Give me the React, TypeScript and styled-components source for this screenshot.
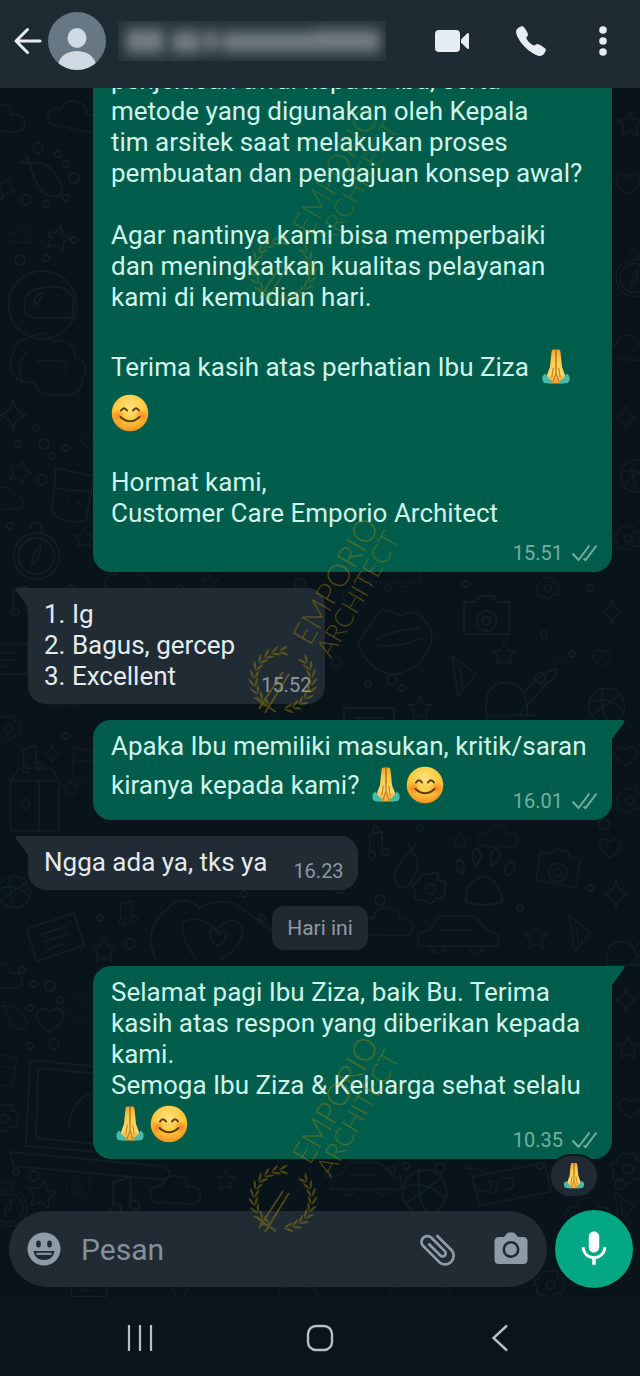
import React from "react";
import styled, { createGlobalStyle } from "styled-components";
import { MdAttachFile, MdMic } from "react-icons/md";
import { IoCall } from "react-icons/io5";

const GlobalStyle = createGlobalStyle`
  * { box-sizing: border-box; }
  body { margin: 0; background: #0b141a; font-family: Roboto, "Liberation Sans", sans-serif; }
`;

const Screen = styled.div`
  position: relative;
  display: flex;
  flex-direction: column;
  height: 100vh;
  overflow: hidden;
  background: #08131a;
`;

const Header = styled.header`
  display: flex;
  align-items: center;
  flex: none;
  height: 88px;
  padding: 0 26px 6px 10px;
  background: #1f2b33;
  z-index: 1;
`;

const IconButton = styled.button<{ $size?: number; $color?: string }>`
  display: flex;
  align-items: center;
  justify-content: center;
  flex: none;
  width: ${(p) => p.$size ?? 36}px;
  height: ${(p) => p.$size ?? 36}px;
  padding: 0;
  border: 0;
  background: none;
  color: ${(p) => p.$color ?? "#e6edf2"};
`;

const Avatar = styled.svg`
  flex: none;
  width: 58px;
  height: 58px;
  margin-left: 2px;
`;

const HiddenName = styled.svg`
  flex: none;
  width: 268px;
  height: 40px;
  margin-left: 12px;
`;

const HeaderActions = styled.div`
  display: flex;
  align-items: center;
  justify-content: space-between;
  width: 180px;
  margin-left: auto;
`;

const Chat = styled.main`
  position: relative;
  display: flex;
  flex-direction: column;
  flex: 1;
  min-height: 0;
  overflow: hidden;
`;

const Wallpaper = styled.svg`
  position: absolute;
  inset: 0;
  width: 100%;
  height: 100%;
`;

const Messages = styled.section`
  position: relative;
  display: flex;
  flex-direction: column;
  justify-content: flex-end;
  align-items: flex-start;
  gap: 16px;
  flex: 1;
  min-height: 0;
  padding: 0 28px 51px;
`;

const Bubble = styled.article<{ $out?: boolean; $tail?: boolean }>`
  position: relative;
  display: grid;
  flex: none;
  grid-template-columns: ${(p) => (p.$out ? "1fr" : "auto auto")};
  column-gap: 26px;
  align-self: ${(p) => (p.$out ? "stretch" : "flex-start")};
  margin-left: ${(p) => (p.$out ? "65px" : "0")};
  padding: ${(p) => (p.$out ? "11px 14px 12px 18px" : "11px 14px 12px 16px")};
  border-radius: ${(p) => (p.$out ? (p.$tail ? "18px 0 18px 18px" : "18px") : "0 18px 18px 18px")};
  background: ${(p) => (p.$out ? "#005d4b" : "#202b33")};
  color: ${(p) => (p.$out ? "#d0f3ea" : "#e4eaee")};
`;

const Body = styled.div`
  grid-row: 1;
  grid-column: 1;
  font-size: 26px;
  line-height: 31px;
  white-space: nowrap;
`;

const Line = styled.div<{ $emoji?: boolean }>`
  display: flex;
  align-items: center;
  gap: 8px;
  height: ${(p) => (p.$emoji ? 46 : 31)}px;
`;

const EmojiGroup = styled.span`
  display: flex;
  gap: 1px;
`;

const Meta = styled.div<{ $out?: boolean }>`
  grid-row: 1;
  grid-column: ${(p) => (p.$out ? 1 : 2)};
  justify-self: end;
  align-self: end;
  display: flex;
  align-items: center;
  gap: 8px;
  height: 24px;
  margin-bottom: -5px;
  font-size: 20px;
  line-height: 24px;
  color: ${(p) => (p.$out ? "#76afa2" : "#8d989f")};
`;

const TailShape = styled.svg<{ $out?: boolean }>`
  position: absolute;
  top: 0;
  ${(p) => (p.$out ? "right: -13px; transform: scaleX(-1);" : "left: -13px;")}
  width: 14px;
  height: 20px;
  fill: ${(p) => (p.$out ? "#005d4b" : "#202b33")};
`;

const DatePill = styled.div`
  align-self: center;
  flex: none;
  height: 44px;
  padding: 0 15px;
  border-radius: 12px;
  background: #1e2930;
  color: #8f9aa1;
  font-size: 21px;
  line-height: 44px;
`;

const Reaction = styled.span`
  position: absolute;
  right: 13px;
  bottom: -39px;
  display: flex;
  align-items: center;
  justify-content: center;
  width: 50px;
  height: 44px;
  border: 2px solid #0b171e;
  border-radius: 22px;
  background: #1f2a32;
`;

const Composer = styled.form`
  position: relative;
  display: flex;
  align-items: center;
  flex: none;
  gap: 8px;
  padding: 0 7px 9px 9px;
`;

const InputBar = styled.div`
  display: flex;
  align-items: center;
  flex: 1;
  min-width: 0;
  height: 76px;
  padding: 0 18px 0 17px;
  border-radius: 38px;
  background: #202b34;
`;

const MessageInput = styled.input`
  flex: 1;
  min-width: 0;
  height: 44px;
  margin: 0 12px 0 19px;
  padding: 0;
  border: 0;
  outline: 0;
  background: transparent;
  color: #e4eaee;
  font-family: inherit;
  font-size: 30px;
  &::placeholder { color: #85919a; opacity: 1; }
`;

const BarActions = styled.div`
  display: flex;
  gap: 38px;
`;

const ClipIcon = styled(MdAttachFile)`
  flex: none;
  transform: rotate(-45deg);
`;

const MicButton = styled(IconButton)`
  border-radius: 50%;
  background: #04a784;
`;

const SystemNav = styled.nav`
  display: flex;
  align-items: center;
  justify-content: space-between;
  flex: none;
  height: 79px;
  padding: 3px 19% 0;
  background: #0b141b;
`;

const WatermarkMark = styled.svg<{ $top: number; $faint?: boolean }>`
  position: absolute;
  z-index: 2;
  top: ${(p) => p.$top}px;
  left: calc(50% - 80px);
  width: 170px;
  height: 210px;
  pointer-events: none;
  overflow: visible;
  opacity: ${(p) => (p.$faint ? 0.3 : 0.42)};
`;

function Smile({ size = 38 }: { size?: number }) {
  return (
    <svg width={size} height={size} viewBox="0 0 38 38" role="img" aria-label="smiling face">
      <defs>
        <radialGradient id="face" cx="50%" cy="32%" r="68%">
          <stop offset="0" stopColor="#ffe27a" />
          <stop offset=".6" stopColor="#ffc83a" />
          <stop offset="1" stopColor="#ef9520" />
        </radialGradient>
        <radialGradient id="cheek">
          <stop offset="0" stopColor="#f56a1c" stopOpacity=".75" />
          <stop offset="1" stopColor="#f56a1c" stopOpacity="0" />
        </radialGradient>
      </defs>
      <circle cx="19" cy="19" r="18.3" fill="url(#face)" />
      <circle cx="7.5" cy="22" r="6.5" fill="url(#cheek)" />
      <circle cx="30.5" cy="22" r="6.5" fill="url(#cheek)" />
      <g fill="none" stroke="#5c3a12" strokeWidth="2" strokeLinecap="round">
        <path d="M10 16.5q3-4.600 6 0M22 16.5q3-4.600 6 0" />
        <path d="M9.500 23q9.500 8.500 19 0" />
      </g>
    </svg>
  );
}

function Hands({ size = 38 }: { size?: number }) {
  return (
    <svg width={size} height={size} viewBox="0 0 38 38" role="img" aria-label="folded hands">
      <defs>
        <linearGradient id="skin" x1="0" x2="0" y1="0" y2="1">
          <stop offset="0" stopColor="#f5a52b" />
          <stop offset=".3" stopColor="#ffca48" />
          <stop offset=".7" stopColor="#ffd968" />
          <stop offset="1" stopColor="#f3a42a" />
        </linearGradient>
      </defs>
      <path d="M18.600 1.500h-2.200q-1.800 0-1.900 2.500L13 19l-3.500 9.500L14 35.500h5zM19.400 1.500h2.200q1.800 0 1.900 2.500L25 19l3.500 9.500L24 35.500h-5z" fill="url(#skin)" />
      <path d="M19 2v23l-3 9M19 25l3 9M16.300 20l-1.500 9M21.700 20l1.500 9" fill="none" stroke="#c8791a" strokeWidth="1.100" strokeLinecap="round" />
      <path d="M8.500 25.500L5.700 28q-1.200 5 1.600 7l6.200.8q2-1 1.900-2.800-4.500-2.300-6.900-7.500zM29.500 25.500l2.800 2.500q1.200 5-1.600 7l-6.200.8q-2-1-1.900-2.800 4.500-2.300 6.900-7.500z" fill="#46bba9" />
    </svg>
  );
}

function Checks() {
  return (
    <svg width="27" height="18" viewBox="0 0 27 18" fill="none" stroke="currentColor" strokeWidth="2" aria-label="delivered">
      <path d="M1.500 9.500l6 6.500L18.500 1.500M12.500 14.500l2 1.500L25.500 1.500" />
    </svg>
  );
}

function Tail({ out }: { out?: boolean }) {
  return (
    <TailShape $out={out} viewBox="0 0 14 20" aria-hidden>
      <path d="M14 0H3Q-1 0 1.500 3.500L13 19l1 1z" />
    </TailShape>
  );
}

const shapes = {
  cloud: "M-22 12q-12-2-8-13 4-8 12-5 3-14 17-12 12 2 12 12 12-2 14 8 1 10-9 11z",
  star: "M0-14l4 9 10 1-7 7 2 10-9-5-9 5 2-10-7-7 10-1z",
  sparkle: "M0-15q2 12 13 15-11 3-13 15-2-12-13-15 11-3 13-15z",
  heart: "M0 12q-16-10-13-19 5-8 13-1 8-7 13 1 3 9-13 19z",
  camera: "M-22-14h12l3-6h15l3 6h12v32h-45zM0-5a10 10 0 1 0 1 0M0 1a4 4 0 1 0 1 0",
  note: "M-8 10a4 4 0 1 0 1-1V-10l14-4V7a4 4 0 1 0 1-1",
  envelope: "M-26-16h50v34h-50zM-14-6h26M-14 2h26M-14 10h18",
  compass: "M0-23a23 23 0 1 0 1 0M0-18a18 18 0 1 0 1 0M-5 10l3-12L5-12 3 2zM-6-28a6 6 0 1 1 12 0v5",
  helmet: "M0-34a34 34 0 1 0 1 0M32-6Q26-20 6-18q-24 2-24 18t22 13h26zM-8-4q4-8 8-8-1 10-8 12z",
  body: "M-28-30q-20 32 4 46h14q2 14 24 14 30 2 28-18 12-18-8-24V-18q-4-14-24-12-8-14-26-4zM-24 16q-8-24 6-34M-8-8h28q8 4 4 12",
  cup: "M-16-24l38 8-8 44q-22 6-34-8zM-20-4l38 4M-6 6l2 2M6 10l2 3",
  lips: "M-40 12q16-26 24-34 14 2 18 6 16-8 22 2 14 12 8 28-10 24-34 28-26 0-38-30zM-22 8q16-10 44-12M-20 14q20 2 44-8",
  carton: "M-24-26l10-14h36l8 14v56h-54zM-24-26h54M8-26v56M-12-2q6-8 10 4-6 8-10-4z",
  paw: "M-18 24q-2-20 18-26 18 6 18 26-18 6-36 0zM-22-4q-10-8-4-14 10 2 4 14zM-8-12q-8-12 0-18 10 6 0 18zM8-12q-4-14 4-18 10 8-4 18zM22-2q-4-12 6-14 8 8-6 14z",
  flower: "M0-14q10-4 8 6 12 0 6 10 4 10-8 8-6 10-12 2-12 2-8-8-8-8 2-10 2-10 12-8zM0-4a5 5 0 1 0 1 0",
  laptop: "M-60-50l118 12-4 84-118-10zM-52-42l102 10-4 70-100-10zM-80 42l150 14q16 4 6 14L-76 56zM-22 18q6-40 36-34 20 4 12 38",
  hands: "M-60 26q-14-30 10-50 16-18 34-2Q-4-36 20-30l40 30M-20 26Q-50-20-16-14q10 4 16 10Q16-20 26-8 30 10 4 26M-6-2q6-6 8 2 8-6 8 2-2 8-8 10-8-4-8-14",
  ball: "M0-20a20 20 0 1 0 1 0M-18-4q18-8 36 8M-4-20q-4 20 6 38M-16 10Q0 0 14-12",
  whistle: "M-20 24q-8-40 16-40 20 0 20 30h-8l26-30q10-4 8-12-14 2-28 20M-20 14h44",
  eggplant: "M-16-16q14-4 24 8 14 20 4 24-14 2-20-10-6-12-8-22zM-16-16l-10-2M-16-16l-4-8",
  car: "M-50 10v-16l14-4 12-18h44l16 18 14 4v16zM-34 10a9 9 0 1 0 18 0M14 10a9 9 0 1 0 18 0M-20-10h36",
  triangle: "M-12-20l24 18-18 22zM-4-8l2 18",
  ticket: "M-42-10l80-16 8 32-80 16zM-24-4q10-4 10 4t-8 8M-6-8q10-4 10 4t-8 8",
} as const;

type ShapeName = keyof typeof shapes;
type DoodleProps = { name: ShapeName; x: number; y: number; s?: number; r?: number };

function Doodle({ name, x, y, s = 1, r = 0 }: DoodleProps) {
  return <path d={shapes[name]} transform={`translate(${x} ${y}) rotate(${r}) scale(${s})`} />;
}

const doodles: [ShapeName, number, number, number?, number?][] = [
  ["cloud", 2, 32, 0.9], ["cloud", 76, 30, 0.9, 10], ["eggplant", 46, 92], ["sparkle", 6, 100, 0.8, 20],
  ["cloud", 22, 148, 0.5], ["star", 58, 150, 0.9, 15], ["helmet", 42, 217], ["body", 44, 280, 0.9],
  ["sparkle", 13, 327], ["star", 20, 384, 0.8, 20], ["cup", 72, 404], ["compass", 36, 468], ["cloud", 6, 412, 0.7],
  ["heart", 88, 352, 0.6], ["star", 84, 450, 0.7],
  ["star", 630, 36, 0.9], ["heart", 628, 96, 0.9], ["compass", 634, 190, 0.8], ["cloud", 630, 262, 0.8],
  ["sparkle", 626, 330, 0.8], ["ball", 636, 388, 0.8], ["flower", 628, 450, 0.8],
  ["envelope", 6, 570, 0.9], ["note", 20, 512], ["flower", 8, 640, 0.8], ["note", 30, 670, 0.9], ["sparkle", 52, 666, 0.6],
  ["cloud", 130, 492, 0.8], ["star", 210, 494, 0.6], ["lips", 398, 544], ["camera", 486, 528], ["sparkle", 612, 524, 0.8],
  ["star", 504, 566, 0.8], ["triangle", 464, 588], ["camera", 560, 570, 0.3], ["heart", 602, 570, 0.7],
  ["whistle", 510, 612, 1.1], ["ball", 606, 618, 0.9], ["star", 420, 620, 0.8], ["envelope", 370, 636],
  ["heart", 352, 510, 0.7], ["flower", 548, 500, 0.7], ["car", 390, 488, 0.6],
  ["cloud", 64, 610, 0.6], ["star", 70, 700, 0.6], ["carton", 32, 716, 0.9], ["cup", 84, 674, 0.6], ["heart", 626, 668, 0.8],
  ["flower", 630, 712, 0.8], ["ticket", 128, 776, 0.6], ["note", 376, 756, 0.9], ["eggplant", 406, 782, 0.9, 60],
  ["star", 460, 752, 0.6], ["cloud", 500, 750, 0.7], ["camera", 558, 780, 0.9, 10], ["heart", 610, 760, 0.8],
  ["flower", 430, 800, 1], ["paw", 484, 790, 1], ["sparkle", 616, 806, 0.9], ["cloud", 390, 836, 0.9],
  ["ball", 14, 804, 0.8], ["envelope", 56, 848, 1, -18], ["note", 126, 824, 0.8], ["star", 104, 862, 0.9],
  ["hands", 216, 846, 1], ["car", 458, 850, 0.8], ["star", 536, 850, 0.8], ["triangle", 580, 846, 0.9], ["whistle", 624, 866, 0.8],
  ["cloud", 2, 890, 0.8], ["heart", 50, 932, 1], ["eggplant", 16, 930, 0.7], ["body", 78, 920, 0.4],
  ["laptop", 90, 1022, 1], ["flower", 4, 1030, 0.9], ["cup", 4, 980, 0.6], ["star", 42, 1106, 1, 10],
  ["camera", 78, 1098, 0.5], ["note", 122, 1106, 1.2], ["cloud", 178, 1104, 0.9], ["star", 226, 1092, 0.7],
  ["compass", 8, 1120, 0.8], ["car", 366, 1094, 0.7], ["ball", 424, 1104, 1.1], ["ticket", 510, 1098, 0.9],
  ["eggplant", 480, 1092, 0.7], ["flower", 628, 1080, 1], ["heart", 630, 1020, 0.8], ["star", 628, 960, 0.8],
  ["sparkle", 626, 912, 0.8], ["cloud", 590, 1124, 0.8], ["triangle", 624, 1120, 0.8],
  ["envelope", 90, 1196, 0.7], ["star", 180, 1204, 0.6], ["cloud", 300, 1204, 0.7], ["car", 420, 1204, 0.6], ["flower", 550, 1196, 0.9],
];

const dots: [number, number][] = [
  [38, 60], [58, 66], [66, 76], [26, 112], [46, 116], [66, 110], [74, 90], [74, 152], [46, 170], [20, 172], [36, 340],
  [18, 356], [44, 356], [52, 368], [66, 360], [42, 392], [10, 438], [388, 500], [392, 592], [402, 600], [368, 596],
  [336, 574], [544, 546], [572, 566], [540, 590], [66, 648], [76, 586], [586, 640], [376, 742], [420, 740], [604, 736],
  [24, 800], [100, 830], [130, 856], [22, 882], [34, 896], [50, 898], [60, 912], [30, 920], [54, 956], [30, 958],
  [16, 1084], [34, 1088], [392, 1082], [406, 1078], [440, 1080], [328, 1086], [540, 1078], [620, 1096], [244, 806],
  [262, 830], [380, 812], [520, 820], [590, 800], [340, 800], [70, 500], [180, 500], [300, 496], [466, 496], [590, 500],
];

function ChatWallpaper() {
  return (
    <Wallpaper aria-hidden fill="none" stroke="#111e26" strokeWidth="1.800" strokeLinejoin="round" strokeLinecap="round">
      {doodles.map(([name, x, y, s, r]) => (
        <Doodle key={`${name}-${x}-${y}`} name={name} x={x} y={y} s={s} r={r} />
      ))}
      {dots.map(([x, y], i) => (
        <circle key={`${x}-${y}`} cx={x} cy={y} r={i % 3 === 0 ? 5 : 3} />
      ))}
    </Wallpaper>
  );
}

function leaves(from: number, to: number, count: number) {
  const direction = Math.sign(to - from);
  return Array.from({ length: count }, (_, i) => {
    const angle = from + ((to - from) * i) / (count - 1);
    const rad = (angle * Math.PI) / 180;
    const x = 43 + 29 * Math.cos(rad);
    const y = 170 + 29 * Math.sin(rad);
    const heading = angle + 90 * direction;
    return (
      <g key={angle} transform={`translate(${x} ${y}) rotate(${heading})`}>
        <path d="M-2 0q3-4 9-5-1 4-9 5zM-2 0q3 4 9 5-1-4-9-5z" />
      </g>
    );
  });
}

function Watermark({ top, faint }: { top: number; faint?: boolean }) {
  return (
    <WatermarkMark $top={top} $faint={faint} viewBox="0 0 170 210">
      <g fill="#a88b08">
        {leaves(122, 266, 10)}
        {leaves(84, -38, 9)}
        <g fill="none" stroke="#a88b08" strokeWidth="2">
          <path d="M19 199L43 162M25 203L49 164M18 190l18 12" />
        </g>
      </g>
      <g fill="#a88b08" fontFamily="Lato, sans-serif" fontWeight="300">
        <text transform="translate(70 137) rotate(-60)" fontSize="31">EMPORIO</text>
        <text transform="translate(91 149) rotate(-60)" fontSize="26">ARCHITECT</text>
      </g>
    </WatermarkMark>
  );
}

function OutgoingMeta({ time }: { time: string }) {
  return (
    <Meta $out>
      <time>{time}</time>
      <Checks />
    </Meta>
  );
}

export default function App() {
  return (
    <Screen>
      <GlobalStyle />
      <Header>
        <IconButton aria-label="Kembali">
          <svg width="32" height="32" viewBox="0 0 32 32" fill="none" stroke="currentColor" strokeWidth="3" strokeLinecap="round" strokeLinejoin="round">
            <path d="M28 16H4M15.500 4.500L4 16l11.500 11.500" />
          </svg>
        </IconButton>
        <Avatar viewBox="0 0 58 58" role="img" aria-label="Foto profil">
          <defs>
            <clipPath id="avatarClip"><circle cx="29" cy="29" r="29" /></clipPath>
          </defs>
          <g clipPath="url(#avatarClip)">
            <rect width="58" height="58" fill="#677884" />
            <ellipse cx="29" cy="26" rx="9.500" ry="10" fill="#cfdae2" />
            <path d="M9 60q0-20 20-21 20 1 20 21z" fill="#cfdae2" />
          </g>
        </Avatar>
        <HiddenName viewBox="0 0 268 40" role="img" aria-label="Nama disamarkan">
          <defs>
            <filter id="soften" x="-10%" y="-60%" width="120%" height="220%"><feGaussianBlur stdDeviation="6 7" /></filter>
          </defs>
          <rect width="268" height="40" fill="#25323a" />
          <g filter="url(#soften)" fill="#747f85">
            <rect x="8" y="8" width="38" height="24" />
            <rect x="54" y="10" width="28" height="22" />
            <rect x="86" y="10" width="14" height="20" />
            <rect x="104" y="11" width="94" height="20" />
            <rect x="196" y="9" width="66" height="22" />
          </g>
        </HiddenName>
        <HeaderActions>
          <IconButton aria-label="Panggilan video">
            <svg width="36" height="24" viewBox="0 0 36 24" fill="currentColor">
              <rect x="1" y="1" width="25" height="22" rx="4" />
              <path d="M27 10.500l6-6q2-1.500 2 1v13q0 2.500-2 1l-6-6z" />
            </svg>
          </IconButton>
          <IconButton aria-label="Panggilan suara"><IoCall size={34} /></IconButton>
          <IconButton aria-label="Menu" $size={22}>
            <svg width="10" height="30" viewBox="0 0 10 30" fill="currentColor">
              <circle cx="5" cy="4" r="3.800" /><circle cx="5" cy="15" r="3.800" /><circle cx="5" cy="26" r="3.800" />
            </svg>
          </IconButton>
        </HeaderActions>
      </Header>

      <Chat>
        <ChatWallpaper />
        <Messages>
          <Bubble $out>
            <Body>
              <Line>penjelasan awal kepada Ibu, serta</Line>
              <Line>metode yang digunakan oleh Kepala</Line>
              <Line>tim arsitek saat melakukan proses</Line>
              <Line>pembuatan dan pengajuan konsep awal?</Line>
              <Line />
              <Line>Agar nantinya kami bisa memperbaiki</Line>
              <Line>dan meningkatkan kualitas pelayanan</Line>
              <Line>kami di kemudian hari.</Line>
              <Line />
              <Line $emoji>Terima kasih atas perhatian Ibu Ziza <Hands /></Line>
              <Line $emoji><Smile /></Line>
              <Line />
              <Line>Hormat kami,</Line>
              <Line>Customer Care Emporio Architect</Line>
              <Line />
            </Body>
            <OutgoingMeta time="15.51" />
          </Bubble>

          <Bubble $tail>
            <Tail />
            <Body>
              <Line>1. Ig</Line>
              <Line>2. Bagus, gercep</Line>
              <Line>3. Excellent</Line>
            </Body>
            <Meta><time>15.52</time></Meta>
          </Bubble>

          <Bubble $out $tail>
            <Tail out />
            <Body>
              <Line>Apaka Ibu memiliki masukan, kritik/saran</Line>
              <Line $emoji>kiranya kepada kami? <EmojiGroup><Hands /><Smile /></EmojiGroup></Line>
            </Body>
            <OutgoingMeta time="16.01" />
          </Bubble>

          <Bubble $tail>
            <Tail />
            <Body><Line>Ngga ada ya, tks ya</Line></Body>
            <Meta><time>16.23</time></Meta>
          </Bubble>

          <DatePill>Hari ini</DatePill>

          <Bubble $out $tail>
            <Tail out />
            <Body>
              <Line>Selamat pagi Ibu Ziza, baik Bu. Terima</Line>
              <Line>kasih atas respon yang diberikan kepada</Line>
              <Line>kami.</Line>
              <Line>Semoga Ibu Ziza &amp; Keluarga sehat selalu</Line>
              <Line $emoji><EmojiGroup><Hands /><Smile /></EmojiGroup></Line>
            </Body>
            <OutgoingMeta time="10.35" />
            <Reaction><Hands size={28} /></Reaction>
          </Bubble>
        </Messages>

        <Composer onSubmit={(e) => e.preventDefault()}>
          <InputBar>
            <IconButton type="button" aria-label="Emoji" $color="#8f9ca6">
              <svg width="34" height="34" viewBox="0 0 34 34">
                <circle cx="17" cy="17" r="16.500" fill="currentColor" />
                <g fill="#202b34">
                  <ellipse cx="11.500" cy="12" rx="2.400" ry="3.500" />
                  <ellipse cx="22.500" cy="12" rx="2.400" ry="3.500" />
                  <path d="M6.500 19h21q-1.500 9-10.500 9T6.500 19z" />
                </g>
                <path d="M9.500 21.800h15" stroke="currentColor" strokeWidth="2" />
              </svg>
            </IconButton>
            <MessageInput type="text" placeholder="Pesan" aria-label="Pesan" />
            <BarActions>
              <IconButton type="button" aria-label="Lampirkan" $color="#8f9ca6">
                <ClipIcon size={43} />
              </IconButton>
              <IconButton type="button" aria-label="Kamera" $color="#8f9ca6">
                <svg width="34" height="34" viewBox="0 0 34 34">
                  <path d="M5 5h5l3-3.500q1-1 2-1h4q1 0 2 1L24 5h5q4.500 0 4.500 4.500v18Q33.500 32 29 32H5Q.5 32 .5 27.500v-18Q.5 5 5 5z" fill="currentColor" />
                  <circle cx="17" cy="17.500" r="7.200" fill="none" stroke="#202b34" strokeWidth="2.600" />
                </svg>
              </IconButton>
            </BarActions>
          </InputBar>
          <MicButton type="button" aria-label="Rekam suara" $size={78} $color="#fff"><MdMic size={42} /></MicButton>
        </Composer>
      </Chat>

      <SystemNav aria-label="Navigasi sistem">
        <IconButton aria-label="Aplikasi terbaru" $color="#b9c0c5">
          <svg width="26" height="28" viewBox="0 0 26 28" stroke="currentColor" strokeWidth="2.200"><path d="M2 1v26M13 1v26M24 1v26" /></svg>
        </IconButton>
        <IconButton aria-label="Beranda" $color="#b9c0c5">
          <svg width="28" height="28" viewBox="0 0 28 28" fill="none" stroke="currentColor" strokeWidth="2.400"><rect x="2" y="2" width="24" height="24" rx="8" /></svg>
        </IconButton>
        <IconButton aria-label="Kembali ke layar sebelumnya" $color="#b9c0c5">
          <svg width="18" height="28" viewBox="0 0 18 28" fill="none" stroke="currentColor" strokeWidth="2.400"><path d="M16 1.500L2.500 14 16 26.500" /></svg>
        </IconButton>
      </SystemNav>

      <Watermark top={100} faint />
      <Watermark top={510} />
      <Watermark top={1029} />
    </Screen>
  );
}
